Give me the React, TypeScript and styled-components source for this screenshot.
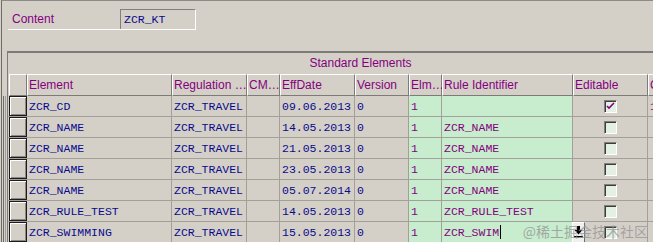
import React from 'react'
import styled, { createGlobalStyle } from 'styled-components'

const GlobalStyle = createGlobalStyle`
  html, body {
    margin: 0;
    padding: 0;
    background: #d4d0c8;
    overflow: hidden;
  }
  body {
    font-family: 'Liberation Sans', Arial, sans-serif;
  }
`

const PURPLE = '#85007f'
const BLUE = '#0a0a8c'
const GREEN = '#c7ecce'
const GRID = '#a3a09a'

// column widths, left to right, incl. borders
const COLUMNS = '19px 145px 75px 33px 75px 54px 33px 131px 75px 64px'

const Window = styled.div`
  position: relative;
  height: 241px;
  margin-left: 1px;
  border-top: 1px solid #8e8b86;
  border-left: 1px solid #6e6c68;
  overflow: hidden;
`

const FieldRow = styled.div`
  display: flex;
  width: 188px;
  height: 20px;
  margin: 8px 0 0 6px;
  border-bottom: 1px solid #ffffff;
`

const FieldLabel = styled.div`
  width: 112px;
  padding-left: 4px;
  box-sizing: border-box;
  color: ${PURPLE};
  font-size: 12px;
  line-height: 20px;
`

const FieldValue = styled.div`
  width: 76px;
  box-sizing: border-box;
  padding-left: 3px;
  border-top: 1px solid #808080;
  border-left: 1px solid #808080;
  border-right: 1px solid #ffffff;
  color: ${BLUE};
  font-family: 'Liberation Mono', 'Courier New', monospace;
  font-size: 11.5px;
  line-height: 19px;
`

const Table = styled.div`
  width: 705px;
  margin: 21px 0 0 5px;
  border-top: 2px solid #7d7b77;
  border-left: 1px solid #7d7b77;
`

const TableTitle = styled.div`
  height: 21px;
  line-height: 20px;
  text-align: center;
  color: ${PURPLE};
  font-size: 12px;
`

const HeaderRow = styled.div`
  display: grid;
  grid-template-columns: ${COLUMNS};
  height: 22px;
`

const HeaderCell = styled.div<{ $blank?: boolean }>`
  box-sizing: border-box;
  border-top: 1px solid #ffffff;
  border-left: 1px solid #ffffff;
  border-right: 1px solid #7d7b77;
  border-bottom: 1px solid #7d7b77;
  margin-left: ${p => (p.$blank ? '1px' : '0')};
  padding-left: 1px;
  color: ${PURPLE};
  font-size: 12px;
  line-height: 20px;
  white-space: nowrap;
`

const Body = styled.div`
  box-shadow:
    -1px 0 0 #7d7b77,
    -2px 0 0 #d4d0c8,
    -3px 0 0 #a09d98,
    -4px 0 0 #d4d0c8,
    -5px 0 0 #6e6c68;
`

const DataRow = styled.div`
  display: grid;
  grid-template-columns: ${COLUMNS};
  height: 21px;
  box-sizing: border-box;
  border-bottom: 1px solid ${GRID};
`

const DataCell = styled.div<{ $input?: boolean; $center?: boolean }>`
  position: relative;
  box-sizing: border-box;
  display: flex;
  align-items: center;
  justify-content: ${p => (p.$center ? 'center' : 'flex-start')};
  padding-left: ${p => (p.$center ? '0' : '2px')};
  border-right: 1px solid ${GRID};
  background: ${p => (p.$input ? GREEN : 'transparent')};
  color: ${p => (p.$input ? PURPLE : BLUE)};
  font-family: 'Liberation Mono', 'Courier New', monospace;
  font-size: 11.5px;
  white-space: nowrap;
`

const SelectorCell = styled.div`
  padding-left: 1px;
`

const RowButton = styled.div`
  width: 18px;
  height: 20px;
  box-sizing: border-box;
  border: 1px solid #1c1c1c;
  background: #d4d0c8;
  box-shadow:
    inset 1px 1px 0 #ffffff,
    inset -1px -1px 0 #8a8884;
`

const Checkbox = styled.span`
  display: flex;
  align-items: center;
  justify-content: center;
  width: 13px;
  height: 13px;
  box-sizing: border-box;
  border-style: solid;
  border-width: 1px;
  border-color: #808080 #ffffff #ffffff #808080;
  box-shadow: inset 1px 1px 0 #3c3c3c;
  background: #e3f1e3;
`

const Caret = styled.span`
  display: inline-block;
  width: 1px;
  height: 14px;
  margin-left: 1px;
  background: #000000;
`

const HelpButton = styled.div`
  position: absolute;
  top: 0;
  left: 100%;
  width: 13px;
  height: 21px;
  box-sizing: border-box;
  display: flex;
  align-items: flex-start;
  justify-content: center;
  padding-top: 3px;
  border-style: solid;
  border-width: 1px;
  border-color: #ffffff #6e6c68 #6e6c68 #ffffff;
  background: #efefef;
`

const Watermark = styled.div`
  position: absolute;
  right: 5px;
  bottom: 2px;
  color: rgba(150, 150, 150, 0.8);
  font-family: 'Noto Sans CJK SC', sans-serif;
  font-size: 14px;
  line-height: 18px;
  pointer-events: none;
`

type Row = {
  element: string
  date: string
  rule: string
  checked?: boolean
  extra?: string
  editing?: boolean
}

const rows: Row[] = [
  { element: 'ZCR_CD', date: '09.06.2013', rule: '', checked: true, extra: '1' },
  { element: 'ZCR_NAME', date: '14.05.2013', rule: 'ZCR_NAME' },
  { element: 'ZCR_NAME', date: '21.05.2013', rule: 'ZCR_NAME' },
  { element: 'ZCR_NAME', date: '23.05.2013', rule: 'ZCR_NAME' },
  { element: 'ZCR_NAME', date: '05.07.2014', rule: 'ZCR_NAME' },
  { element: 'ZCR_RULE_TEST', date: '14.05.2013', rule: 'ZCR_RULE_TEST' },
  { element: 'ZCR_SWIMMING', date: '15.05.2013', rule: 'ZCR_SWIM', editing: true },
]

const headers = ['Element', 'Regulation …', 'CM…', 'EffDate', 'Version', 'Elm…', 'Rule Identifier', 'Editable', 'Check']

const CheckMark = () => (
  <svg width="9" height="8" viewBox="0 0 9 8">
    <path d="M1 4 L3 6 L8 1" stroke={PURPLE} strokeWidth="1.6" fill="none" />
  </svg>
)

const F4Icon = () => (
  <svg width="9" height="12" viewBox="0 0 9 12">
    <path d="M3 0 H6 V4 H8.5 L4.5 8.5 L0.5 4 H3 Z" fill="#000" />
    <rect x="0" y="10" width="9" height="1.5" fill="#000" />
  </svg>
)

export default function App() {
  return (
    <>
      <GlobalStyle />
      <Window>
        <FieldRow>
          <FieldLabel>Content</FieldLabel>
          <FieldValue>ZCR_KT</FieldValue>
        </FieldRow>

        <Table>
          <TableTitle>Standard Elements</TableTitle>
          <HeaderRow>
            <HeaderCell $blank />
            {headers.map(h => (
              <HeaderCell key={h}>{h}</HeaderCell>
            ))}
          </HeaderRow>
          <Body>
            {rows.map((r, i) => (
              <DataRow key={i}>
                <SelectorCell>
                  <RowButton />
                </SelectorCell>
                <DataCell>{r.element}</DataCell>
                <DataCell>ZCR_TRAVEL</DataCell>
                <DataCell />
                <DataCell>{r.date}</DataCell>
                <DataCell>0</DataCell>
                <DataCell $input>1</DataCell>
                <DataCell $input>
                  {r.rule}
                  {r.editing && <Caret />}
                  {r.editing && (
                    <HelpButton>
                      <F4Icon />
                    </HelpButton>
                  )}
                </DataCell>
                <DataCell $center>
                  <Checkbox>{r.checked && <CheckMark />}</Checkbox>
                </DataCell>
                <DataCell style={{ color: PURPLE }}>{r.extra}</DataCell>
              </DataRow>
            ))}
          </Body>
        </Table>

        <Watermark>@稀土掘金技术社区</Watermark>
      </Window>
    </>
  )
}
